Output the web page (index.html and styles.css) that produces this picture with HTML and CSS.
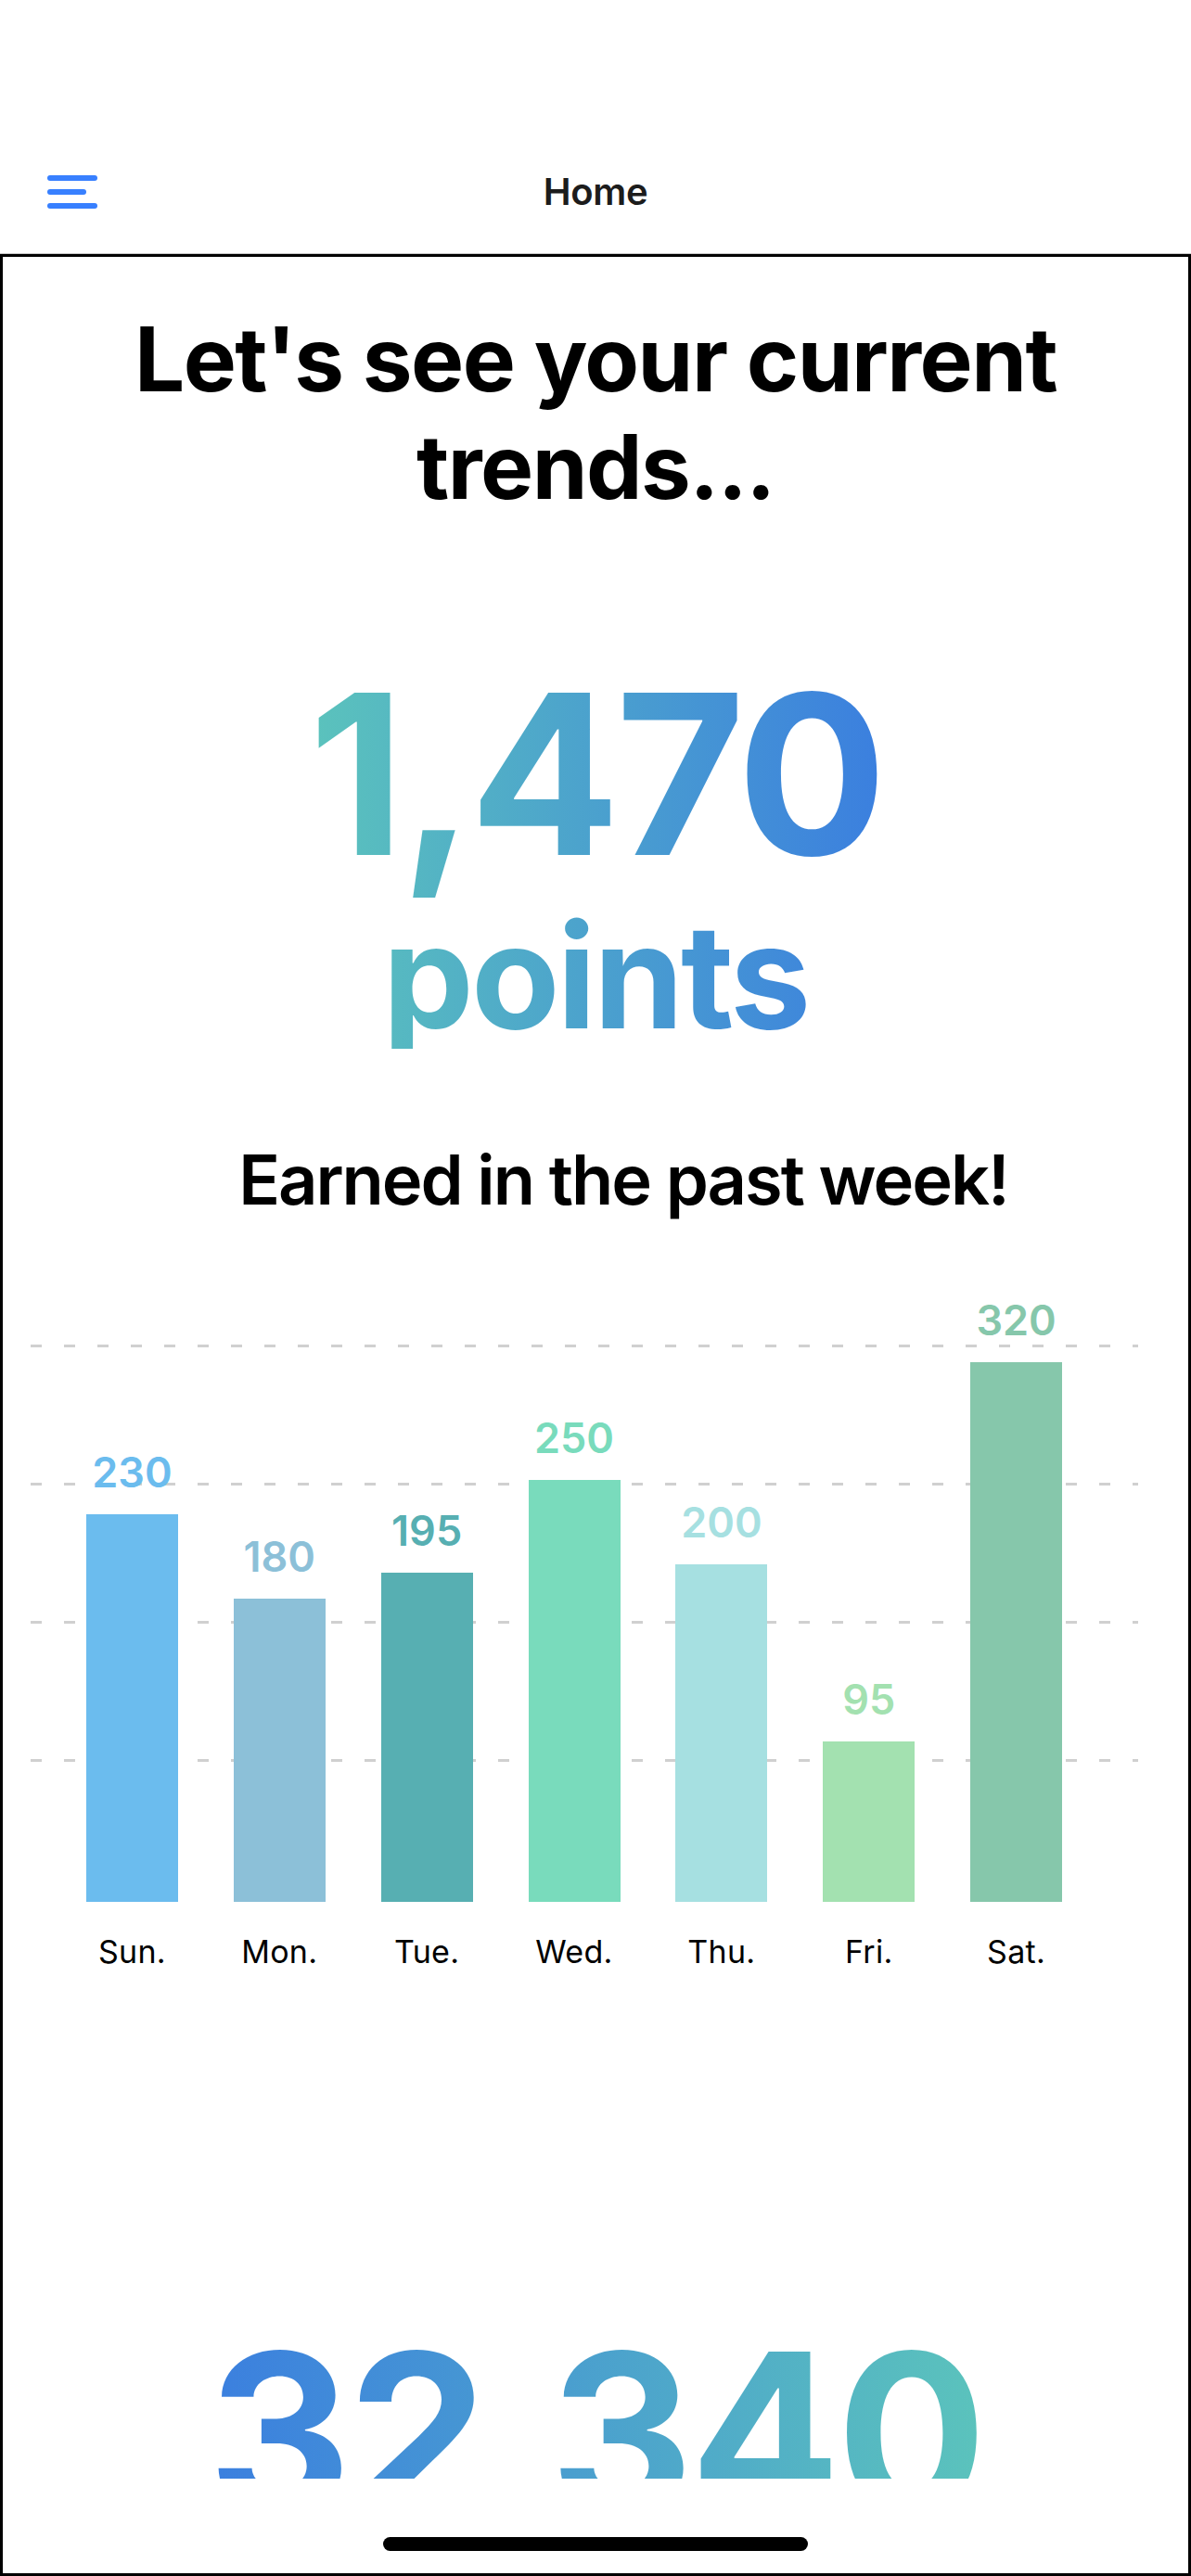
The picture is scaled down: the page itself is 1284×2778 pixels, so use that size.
FILE: index.html
```html
<!DOCTYPE html>
<html lang="en">
<head>
    <meta charset="UTF-8">
    <meta name="viewport" content="width=device-width, initial-scale=1.0">
    <title>Home</title>
    <link rel="stylesheet" href="styles.css">
</head>
<body>
    <header class="topbar">
        <div class="toolbar">
            <button class="menuBtn" aria-label="Menu">
                <svg width="54" height="36" viewBox="0 0 54 36">
                    <g stroke="#3880ff" stroke-width="6" stroke-linecap="round">
                        <line x1="3" y1="3" x2="51" y2="3"/>
                        <line x1="3" y1="18" x2="39" y2="18"/>
                        <line x1="3" y1="33" x2="51" y2="33"/>
                    </g>
                </svg>
            </button>
            <div class="title">Home</div>
            <div></div>
        </div>
    </header>

    <main class="frame">
        <div class="content">
            <h1 class="headline">Let's see your current trends...</h1>

            <div class="total">
                <div class="totalNum">1,470</div>
                <div class="totalUnit">points</div>
            </div>

            <h2 class="subhead">Earned in the past week!</h2>

            <div class="chart">
                <div class="plot">
                    <!-- grid lines sit behind the bars -->
                    <div class="grid">
                        <span></span><span></span><span></span><span></span>
                    </div>
                    <div class="bars">
                        <div class="col sun"><span class="val">230</span><div class="bar" style="height: 418px;"></div></div>
                        <div class="col mon"><span class="val">180</span><div class="bar" style="height: 327px;"></div></div>
                        <div class="col tue"><span class="val">195</span><div class="bar" style="height: 355px;"></div></div>
                        <div class="col wed"><span class="val">250</span><div class="bar" style="height: 455px;"></div></div>
                        <div class="col thu"><span class="val">200</span><div class="bar" style="height: 364px;"></div></div>
                        <div class="col fri"><span class="val">95</span><div class="bar" style="height: 173px;"></div></div>
                        <div class="col sat"><span class="val">320</span><div class="bar" style="height: 582px;"></div></div>
                    </div>
                </div>
                <div class="days">
                    <span>Sun.</span><span>Mon.</span><span>Tue.</span><span>Wed.</span><span>Thu.</span><span>Fri.</span><span>Sat.</span>
                </div>
            </div>

            <div class="lifetime">32,340</div>
        </div>
        <div class="homeBar"><span></span></div>
    </main>
</body>
</html>
```

FILE: styles.css
```css
body {
    margin: 0;
    padding: 0;
    background: #ffffff;
    font-family: Inter, "Noto Sans", sans-serif;
    color: #000000;
}

/* top toolbar */
.topbar {
    padding-top: 140px;
    border-bottom: 1px solid #c6c6c6;
}

.toolbar {
    height: 133px;
    display: grid;
    grid-template-columns: 1fr auto 1fr;
    align-items: center;
}

.menuBtn {
    justify-self: start;
    margin-left: 51px;
    padding: 0;
    border: none;
    background: none;
    display: flex;
}

.title {
    font-size: 40px;
    font-weight: 600;
    color: #1c1c1c;
    letter-spacing: -0.3px;
}

/* bordered content area */
.frame {
    height: 2504px;
    box-sizing: border-box;
    border: 3px solid #000000;
    display: flex;
    flex-direction: column;
}

.content {
    flex: 1;
    overflow: hidden;
    display: flex;
    flex-direction: column;
    align-items: center;
}

.headline {
    margin: 52px 0 0;
    width: 1100px;
    font-size: 96px;
    font-weight: 700;
    line-height: 116px;
    text-align: center;
    letter-spacing: -1.5px;
}

.total {
    margin-top: 154px;
    display: flex;
    flex-direction: column;
    align-items: center;
    background: linear-gradient(to right, #5bc3bc, #3b7fdf);
    -webkit-background-clip: text;
    background-clip: text;
    color: transparent;
    font-weight: 700;
}

.totalNum {
    font-size: 240px;
    line-height: 240px;
    letter-spacing: -5px;
}

.totalUnit {
    margin-top: 20px;
    font-size: 156px;
    line-height: 156px;
    letter-spacing: -3px;
}

.subhead {
    margin: 97px 0 0 60px;
    font-size: 74px;
    font-weight: 600;
    line-height: 89px;
    letter-spacing: -2px;
}

/* weekly chart */
.chart {
    align-self: flex-start;
    margin: 134px 0 0 30px;
    width: 1194px;
}

.plot {
    position: relative;
    height: 600px;
}

.grid {
    position: absolute;
    inset: 0;
    display: flex;
    flex-direction: column;
}

.grid span {
    height: 150px;
    margin-top: -1px;
    background-image: linear-gradient(to right, #d0d0d0 12px, transparent 12px);
    background-size: 36px 3px;
    background-repeat: repeat-x;
}

.bars {
    position: relative;
    height: 100%;
    padding: 0 52px 0 30px;
    display: flex;
}

.col {
    flex: 1;
    height: 100%;
    display: flex;
    flex-direction: column;
    justify-content: flex-end;
    align-items: center;
}

.val {
    flex-shrink: 0;
    font-size: 45px;
    font-weight: 600;
    line-height: 45px;
    margin-bottom: 23px;
}

.bar {
    flex-shrink: 0;
    width: 99px;
}

.sun .bar { background: #6bbcee; }
.sun .val { color: #6bbcee; }
.mon .bar { background: #8cc0d8; }
.mon .val { color: #8cc0d8; }
.tue .bar { background: #57afb2; }
.tue .val { color: #57afb2; }
.wed .bar { background: #79dbbc; }
.wed .val { color: #79dbbc; }
.thu .bar { background: #a6e0e1; }
.thu .val { color: #a6e0e1; }
.fri .bar { background: #a3e1b0; }
.fri .val { color: #a3e1b0; }
.sat .bar { background: #86c7ab; }
.sat .val { color: #86c7ab; }

.days {
    margin-top: 37px;
    padding: 0 52px 0 30px;
    display: grid;
    grid-template-columns: repeat(7, 1fr);
    text-align: center;
    font-size: 34px;
    line-height: 34px;
    letter-spacing: 0.3px;
    color: #000000;
}

.lifetime {
    margin-top: 382px;
    font-size: 240px;
    font-weight: 700;
    line-height: 240px;
    letter-spacing: -4px;
    background: linear-gradient(to right, #3b7fdf, #5bc3bc);
    -webkit-background-clip: text;
    background-clip: text;
    color: transparent;
}

/* home indicator */
.homeBar {
    height: 102px;
    display: flex;
    justify-content: center;
    flex-shrink: 0;
}

.homeBar span {
    margin-top: 63px;
    width: 458px;
    height: 15px;
    border-radius: 8px;
    background: #000000;
}
```
